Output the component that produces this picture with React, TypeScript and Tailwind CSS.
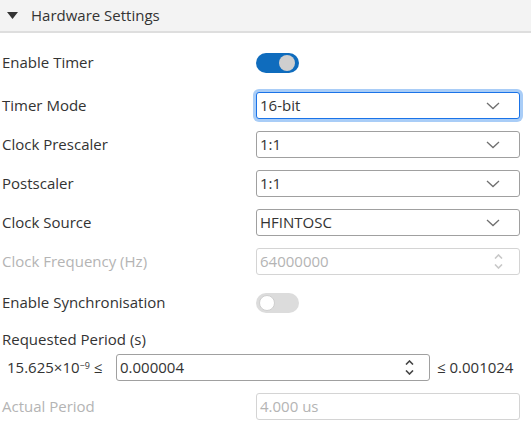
import React from "react";

const font = { fontFamily: '"Segoe UI", "Open Sans", sans-serif' };

function Chevron() {
  return (
    <svg width="14" height="8" viewBox="0 0 14 8" className="text-[#707070]">
      <path d="M1 1l6 5.5L13 1" fill="none" stroke="currentColor" strokeWidth="1.3" />
    </svg>
  );
}

function Spinner({ dim }: { dim?: boolean }) {
  return (
    <div className={"flex flex-col items-center gap-[5px] " + (dim ? "text-[#c8c8c8]" : "text-[#444]")}>
      <svg width="9" height="5" viewBox="0 0 9 5">
        <path d="M1 4.5l3.5-3.5L8 4.5" fill="none" stroke="currentColor" strokeWidth="1.6" />
      </svg>
      <svg width="9" height="5" viewBox="0 0 9 5">
        <path d="M1 0.5l3.5 3.5L8 0.5" fill="none" stroke="currentColor" strokeWidth="1.6" />
      </svg>
    </div>
  );
}

function Toggle({ on }: { on: boolean }) {
  return on ? (
    <div className="w-[43px] h-[20px] rounded-full bg-[#0f6cbd] flex items-center justify-end pr-[4px]">
      <div className="w-[16px] h-[16px] rounded-full bg-[#cfcfcf]" />
    </div>
  ) : (
    <div className="w-[43px] h-[20px] rounded-full bg-[#dcdcdc] flex items-center pl-[3px]">
      <div className="w-[16px] h-[16px] rounded-full bg-white border border-[#cfcfcf]" />
    </div>
  );
}

function Select({ value, focus }: { value: string; focus?: boolean }) {
  return (
    <div
      className={
        "w-[264px] h-[27px] flex items-center justify-between pl-[3px] pr-[19px] rounded-[3px] bg-white text-[15px] text-[#333] " +
        (focus
          ? "border-[1.5px] border-[#1a73e8] ring-[3px] ring-[#a9cdf7]"
          : "border border-[#a0a0a0]")
      }
    >
      <span>{value}</span>
      <Chevron />
    </div>
  );
}

function Row({ label, dim, children }: { label: string; dim?: boolean; children: React.ReactNode }) {
  return (
    <div className="flex items-center h-[39px]">
      <div className={"w-[256px] pl-[2px] text-[15px] " + (dim ? "text-[#b4b4b4]" : "text-[#333]")}>{label}</div>
      {children}
    </div>
  );
}

export default function App() {
  return (
    <div className="w-[531px] h-[431px] bg-white overflow-hidden" style={font}>
      {/* section header */}
      <div className="h-[33px] bg-[#f3f3f3] border-b-2 border-[#dedede] flex items-center">
        <svg width="11" height="8" viewBox="0 0 11 8" className="ml-[7px] mr-[13px]">
          <path d="M0 0h11L5.5 7z" fill="#333" />
        </svg>
        <span className="text-[15px] text-[#333]">Hardware Settings</span>
      </div>
      <div className="pt-[10px]">
        <Row label="Enable Timer">
          <Toggle on />
        </Row>
        <div className="h-[4px]" />
        <Row label="Timer Mode">
          <Select value="16-bit" focus />
        </Row>
        <Row label="Clock Prescaler">
          <Select value="1:1" />
        </Row>
        <Row label="Postscaler">
          <Select value="1:1" />
        </Row>
        <Row label="Clock Source">
          <Select value="HFINTOSC" />
        </Row>
        <Row label="Clock Frequency (Hz)" dim>
          <div className="w-[264px] h-[27px] flex items-center justify-between pl-[3px] pr-[16px] rounded-[3px] border border-[#d4d4d4] text-[15px] text-[#b4b4b4]">
            <span>64000000</span>
            <Spinner dim />
          </div>
        </Row>
        <div className="h-[2px]" />
        <Row label="Enable Synchronisation">
          <Toggle on={false} />
        </Row>
        {/* requested period */}
        <div className="pl-[2px] pt-[7px] h-[28px] text-[15px] text-[#333] leading-[21px]">Requested Period (s)</div>
        <div className="flex items-center mt-[4px] h-[27px] text-[15px] text-[#333]">
          <span className="w-[116px] pl-[7px] whitespace-nowrap">
            15.625×10<sup className="text-[9px]">−9</sup> ≤
          </span>
          <div className="w-[314px] h-[27px] flex items-center justify-between pl-[3px] pr-[15px] rounded-[3px] border border-[#a0a0a0]">
            <span>0.000004</span>
            <Spinner />
          </div>
          <span className="pl-[7px]">≤ 0.001024</span>
        </div>
        <div className="flex items-center h-[39px] mt-[6px]">
          <div className="w-[256px] pl-[2px] text-[15px] text-[#b4b4b4]">Actual Period</div>
          <div className="w-[264px] h-[27px] flex items-center pl-[3px] rounded-[3px] border border-[#d4d4d4] text-[15px] text-[#b4b4b4]">
            4.000 us
          </div>
        </div>
      </div>
    </div>
  );
}
